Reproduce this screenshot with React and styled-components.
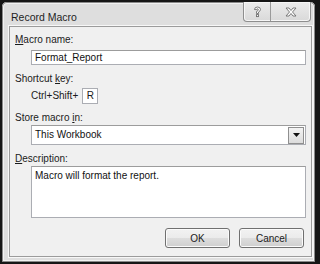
import React from 'react';
import styled, { createGlobalStyle } from 'styled-components';

const Global = createGlobalStyle`
	html, body {
		margin: 0;
		padding: 0;
		background: #161616;
	}
	#root {
		padding: 2px 5px 2px 2px;
		width: 320px;
		height: 264px;
		box-sizing: border-box;
	}
`;

const Window = styled.div`
	box-sizing: border-box;
	width: 313px;
	height: 260px;
	background: #dedede;
	border-radius: 5px 5px 0 0;
	box-shadow: inset 0 0 0 1px #8a8a8a, inset 0 0 0 2px #f2f2f2;
	padding: 0 3px 5px 7px;
	display: flex;
	flex-direction: column;
	font-family: "Liberation Sans", Arial, sans-serif;
	font-size: 10px;
	color: #1b1b1b;
`;

const TitleBar = styled.div`
	height: 27px;
	display: flex;
	align-items: flex-start;
	justify-content: space-between;
`;

const Title = styled.div`
	font-size: 10.5px;
	line-height: 12px;
	margin: 9px 0 0 2px;
	color: #1e1e1e;
`;

const Caps = styled.div`
	display: flex;
	margin-right: 1px;
	border: 1px solid #8e8e8e;
	border-top: none;
	border-radius: 0 0 4px 4px;
	overflow: hidden;
	background: linear-gradient(#ececec, #d9d9d9);
	box-shadow: inset 0 0 0 1px #f6f6f6;
`;

const CapButton = styled.div`
	width: ${p => p.$w}px;
	height: 19px;
	display: flex;
	align-items: center;
	justify-content: center;
	& + & {
		border-left: 1px solid #9a9a9a;
	}
`;

const Panel = styled.div`
	flex: 1;
	background: #f0f0f0;
	border: 1px solid #9b9b9b;
	box-shadow: 0 0 0 1px #f7f7f7;
	padding: 7px 5px 8px 5px;
	display: flex;
	flex-direction: column;
`;

const Label = styled.div`
	line-height: 12px;
	margin-top: ${p => p.$top || 0}px;
	u {
		text-decoration: underline;
		text-underline-offset: 1px;
	}
`;

const TextBox = styled.div`
	box-sizing: border-box;
	margin: ${p => p.$top || 0}px 0 0 16px;
	height: ${p => p.$h}px;
	background: #fff;
	border: 1px solid #abadb3;
	border-top-color: #9c9c9c;
	padding: ${p => p.$pad || '1px 3px'};
	line-height: 12px;
	display: flex;
	align-items: ${p => p.$align || 'center'};
	color: #111;
`;

const KeyRow = styled.div`
	margin: 3px 0 0 16px;
	display: flex;
	align-items: center;
	gap: 4px;
	line-height: 12px;
`;

const KeyBox = styled.div`
	box-sizing: border-box;
	width: 16px;
	height: 16px;
	background: #fff;
	border: 1px solid #abadb3;
	display: flex;
	align-items: center;
	justify-content: center;
`;

const Select = styled(TextBox)`
	padding: 1px 1px 1px 3px;
	justify-content: space-between;
`;

const DropButton = styled.div`
	box-sizing: border-box;
	width: 16px;
	height: 17px;
	border: 1px solid #8f8f8f;
	background: linear-gradient(#f3f3f3, #dcdcdc);
	display: flex;
	align-items: center;
	justify-content: center;
`;

const Footer = styled.div`
	margin-top: 10px;
	display: flex;
	justify-content: flex-end;
	gap: 9px;
	padding-right: 2px;
`;

const Button = styled.div`
	box-sizing: border-box;
	width: ${p => p.$w}px;
	height: 20px;
	border: 1px solid #707070;
	border-radius: 3px;
	background: linear-gradient(#f2f2f2 0%, #ebebeb 50%, #dddddd 51%, #cfcfcf 100%);
	box-shadow: inset 0 0 0 1px #fbfbfb;
	display: flex;
	align-items: center;
	justify-content: center;
	color: #1a1a1a;
`;

export default function App() {
	return (
		<>
			<Global />
			<Window>
				<TitleBar>
					<Title>Record Macro</Title>
					<Caps>
						<CapButton $w={26}>
							<svg width="9" height="12" viewBox="0 0 9 12">
								<path d="M1.5 3.5 Q1.5 1 4.5 1 Q7.5 1 7.5 3.5 Q7.5 5 5.5 6 L5.5 7.5 L3.5 7.5 L3.5 5.5 Q5.3 4.8 5.3 3.7 Q5.3 2.8 4.5 2.8 Q3.6 2.8 3.6 3.7 Z" fill="#fdfdfd" stroke="#6e6e6e" strokeWidth="0.9" />
								<rect x="3.5" y="8.6" width="2" height="2" fill="#fdfdfd" stroke="#6e6e6e" strokeWidth="0.9" />
							</svg>
						</CapButton>
						<CapButton $w={39}>
							<svg width="12" height="10" viewBox="0 0 12 10">
								<path d="M1 1 L4 1 L6 3.5 L8 1 L11 1 L7.5 5 L11 9 L8 9 L6 6.5 L4 9 L1 9 L4.5 5 Z" fill="#fdfdfd" stroke="#6e6e6e" strokeWidth="0.9" strokeLinejoin="round" />
							</svg>
						</CapButton>
					</Caps>
				</TitleBar>
				<Panel>
					<Label><u>M</u>acro name:</Label>
					<TextBox $top={4} $h={15}>Format_Report</TextBox>
					<Label $top={8}>Shortcut <u>k</u>ey:</Label>
					<KeyRow>
						<span>Ctrl+Shift+</span>
						<KeyBox>R</KeyBox>
					</KeyRow>
					<Label $top={8}>Store macro <u>i</u>n:</Label>
					<Select $top={1} $h={20}>
						<span>This Workbook</span>
						<DropButton>
							<svg width="7" height="4" viewBox="0 0 7 4">
								<path d="M0 0 L7 0 L3.5 4 Z" fill="#111" />
							</svg>
						</DropButton>
					</Select>
					<Label $top={8}><u>D</u>escription:</Label>
					<TextBox $top={1} $h={52} $align="flex-start" $pad="3px 3px">Macro will format the report.</TextBox>
					<Footer>
						<Button $w={65}>OK</Button>
						<Button $w={65}>Cancel</Button>
					</Footer>
				</Panel>
			</Window>
		</>
	);
}
